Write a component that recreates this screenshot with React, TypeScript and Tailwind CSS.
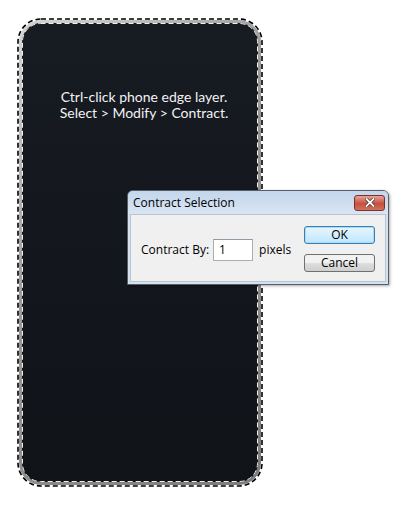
import React from "react";

export default function App() {
  return (
    <div className="relative w-[406px] h-[507px] bg-white overflow-hidden" style={{ fontFamily: "'Open Sans', sans-serif" }}>
      <div className="pt-[18px] pl-[17px]">
        <div className="relative w-[246px] h-[469px] p-[2px]">
          <div className="h-full rounded-[22px] p-[3px] bg-[linear-gradient(135deg,#d6d6d6,#9a9a9a_40%,#7c7c7c)]">
            <div className="h-full rounded-[19px] bg-[linear-gradient(#171b22,#101318)] flex flex-col items-center pt-[66px] pl-[8px]">
              <p className="leading-[16px] text-[#f2f2f2] text-center" style={{ fontFamily: "Lato, 'Open Sans', sans-serif", fontSize: "14px" }}>
                Ctrl-click phone edge layer.
                <br />
                Select &gt; Modify &gt; Contract.
              </p>
            </div>
          </div>
          <svg className="absolute inset-0 pointer-events-none" width="246" height="469" viewBox="0 0 246 469">
            <rect x="1" y="1" width="244" height="467" rx="23" fill="none" stroke="#ffffff" strokeWidth="1.6" />
            <rect x="1" y="1" width="244" height="467" rx="23" fill="none" stroke="#000000" strokeWidth="1.6" strokeDasharray="5 3" />
            <rect x="5.5" y="5.5" width="235" height="458" rx="18" fill="none" stroke="#eeeeee" strokeWidth="1" strokeDasharray="5 3" />
          </svg>
        </div>
      </div>

      <div className="absolute left-[127px] top-[190px] w-[262px] h-[95px] border border-[#555f6a] rounded-t-[6px] bg-[#d4e1ef] flex flex-col shadow-[1px_1px_3px_rgba(0,0,0,0.35)]" style={{ fontFamily: "'Open Sans', sans-serif" }}>
        <div className="h-[23px] flex items-center justify-between pl-[5px] pr-[3px] rounded-t-[5px] bg-[linear-gradient(#c3d6ec,#d9e5f3)]">
          <span className="text-[12px] text-black mt-[1px]">Contract Selection</span>
          <div className="w-[31px] h-[16px] rounded-[3px] border border-[#7a3228] bg-[linear-gradient(#e5a69a,#c74f3d_55%,#d0745e)] flex items-center justify-center">
            <svg width="10" height="9" viewBox="0 0 10 9">
              <path d="M1.5 1 L8.5 8 M8.5 1 L1.5 8" stroke="#4a2a25" strokeWidth="3.2" strokeLinecap="square" />
              <path d="M1.5 1 L8.5 8 M8.5 1 L1.5 8" stroke="#ffffff" strokeWidth="1.8" strokeLinecap="square" />
            </svg>
          </div>
        </div>
        <div className="flex-1 mx-[2px] mb-[2px] bg-[#f0f0f0] border border-[#b8c4d2] flex items-start">
          <div className="flex items-center mt-[24px] ml-[10px]">
            <span className="text-[12px] text-black">Contract By:</span>
            <div className="ml-[4px] w-[40px] h-[22px] border border-[#abadb3] border-t-[#8f9aa6] bg-white flex items-center pl-[5px] text-[12px] text-black">1</div>
            <span className="ml-[6px] text-[12px] text-black">pixels</span>
          </div>
          <div className="ml-auto mr-[10px] mt-[11px] flex flex-col gap-[10px]">
            <div className="w-[71px] h-[18px] rounded-[3px] border border-[#3c7fb1] bg-[linear-gradient(#e8f6fd,#bee6fd)] shadow-[inset_0_0_0_1px_#a8dcf5] flex items-center justify-center text-[12px] text-black">OK</div>
            <div className="w-[71px] h-[18px] rounded-[3px] border border-[#707070] bg-[linear-gradient(#f2f2f2_45%,#dcdcdc_55%,#cfcfcf)] flex items-center justify-center text-[12px] text-black">Cancel</div>
          </div>
        </div>
      </div>
    </div>
  );
}
